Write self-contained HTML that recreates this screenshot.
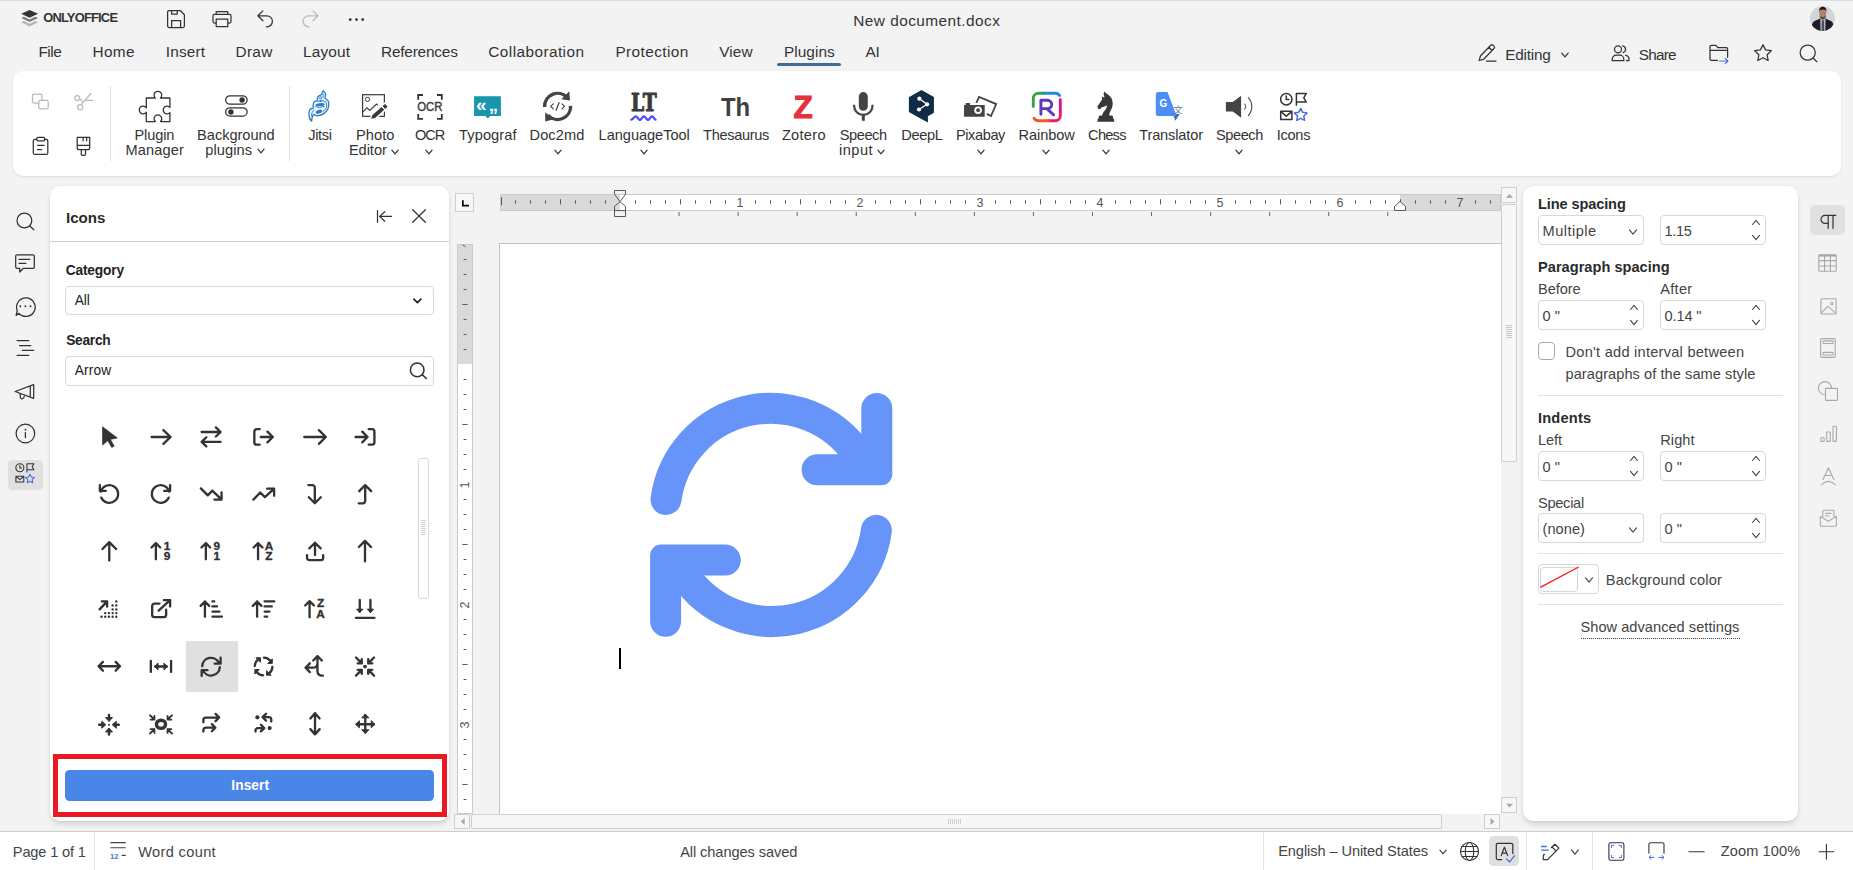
<!DOCTYPE html>
<html lang="en"><head><meta charset="utf-8"><title>New document.docx</title>
<style>
html,body{margin:0;padding:0;}
body{width:1853px;height:870px;overflow:hidden;background:#f3f3f3;position:relative;font-family:"Liberation Sans",sans-serif;color:#333;}
div,svg,span.t{position:absolute;}
span.t{white-space:nowrap;}
svg{overflow:visible;}
.s{fill:none;stroke:#333;stroke-width:1.25;stroke-linecap:round;stroke-linejoin:round;}
.g{fill:none;stroke:#333;stroke-width:2.45;stroke-linecap:round;stroke-linejoin:round;}
.inp{box-sizing:border-box;border:1px solid #d8d8d8;border-radius:4px;background:#fff;}
</style></head>
<body>
<div id="header" style="left:0;top:0;width:0;height:0">
<div style="left:0px;top:0px;width:1853px;height:1.2px;background:#d5dde8;"></div>
<svg style="left:20px;top:9px;" width="18" height="18" viewBox="0 0 18 18">
<path d="M9.6 17.4L1.2 13.3 3.9 12l5.7 2.8 5.7-2.8 2.7 1.3z" fill="#b4b4b4"/>
<path d="M9.6 13.1L1.2 9 3.9 7.7l5.7 2.8 5.7-2.8L18 9z" fill="#7a7a7a"/>
<path d="M9.6 0.9L18 4.8 9.6 8.8 1.2 4.8z" fill="#333"/></svg>
<span class="t" style="top:11.78px;font-size:12.9px;line-height:12.9px;font-weight:700;left:43.2px;letter-spacing:-0.789px;">ONLYOFFICE</span>
<svg style="left:166.00px;top:8.95px;" width="20" height="20" viewBox="-10.0 -10.0 20 20"><path class="s" d="M-8.400 -7a1.500 1.500 0 0 1 1.500-1.500H4.200L8.400 -4.300V7a1.500 1.500 0 0 1-1.500 1.500H-6.900a1.500 1.500 0 0 1-1.500-1.500z M-4.400 -8.500v3.600h5.600V-8.500 M-4.400 8.500V1.600H4.600V8.500"/></svg>
<svg style="left:210.60px;top:8.40px;" width="22" height="22" viewBox="-11.0 -11.0 22 22"><path class="s" d="M-5.800 -4.600V-7.500H5.800v2.900 M-5.800 4.100H-7.500a1.500 1.500 0 0 1-1.500-1.500V-3.100a1.500 1.500 0 0 1 1.500-1.500H7.500a1.500 1.500 0 0 1 1.500 1.500V2.600a1.500 1.500 0 0 1-1.500 1.500H5.800 M-5.800 .2H5.800V7.500H-5.800z"/></svg>
<svg style="left:250px;top:5px;" width="30" height="30" viewBox="0 0 30 30"><path class="s" d="M12.900 5.900L7.800 10.800l5.100 4.900 M8 10.800H16.900a5.500 5.500 0 0 1 0 11H16.300"/></svg>
<svg style="left:295px;top:5px;" width="30" height="30" viewBox="0 0 30 30"><path class="s" style="stroke:#b9b9b9" d="M18 5.900l5.100 4.900-5.100 4.900 M22.900 10.800H13.600a5.500 5.500 0 0 0 0 11h.6"/></svg>
<svg style="left:345px;top:14px;" width="24" height="12" viewBox="0 0 24 12"><circle cx="5.2" cy="5.6" r="1.45" fill="#333"/><circle cx="11.5" cy="5.6" r="1.45" fill="#333"/><circle cx="17.7" cy="5.6" r="1.45" fill="#333"/></svg>
<span class="t" style="top:13.36px;font-size:15.4px;line-height:15.4px;left:853.3px;letter-spacing:0.444px;">New document.docx</span>
<svg style="left:1810px;top:6px;overflow:hidden;border-radius:50%;" width="25" height="25" viewBox="0 0 25 25">
<g><rect width="25" height="25" fill="#d2d6d8"/>
<path d="M1 25.500C1.500 19 2.600 15.800 4.600 14.900L10.200 12.500 12.800 14 15.400 12.500 21 14.900C23 15.800 23.900 19 24.200 25.500z" fill="#1b1e27"/>
<path d="M10.300 12.700L15.500 12.700 15.400 25.500H10.400z" fill="#b4b5c6"/>
<path d="M11.900 14.300h2l.3 11.200h-2.600z" fill="#4b4c58"/>
<path d="M10.900 10h3.800v2.600l-1.900 1.200-1.900-1.200z" fill="#9c715b"/>
<ellipse cx="12.800" cy="6.800" rx="3.500" ry="5" fill="#b0836c"/>
<path d="M9.300 8.500c.3 3.600 1.500 4.700 3.500 4.700s3.200-1.100 3.500-4.700c-.6 2-1.700 2.600-3.500 2.600s-2.900-.6-3.500-2.600z" fill="#5b4335"/>
<path d="M9.100 6c-.4-3.900 1.700-5.300 3.700-5.300s4.100 1.400 3.700 5.300c-.3-1.700-.9-2.500-3.700-2.500s-3.400.8-3.700 2.500z" fill="#1e1613"/></g></svg>
<span class="t" style="top:44.26px;font-size:15.4px;line-height:15.4px;left:38.4px;letter-spacing:-0.428px;">File</span>
<span class="t" style="top:44.26px;font-size:15.4px;line-height:15.4px;left:92.4px;letter-spacing:0.384px;">Home</span>
<span class="t" style="top:44.26px;font-size:15.4px;line-height:15.4px;left:165.8px;letter-spacing:0.133px;">Insert</span>
<span class="t" style="top:44.26px;font-size:15.4px;line-height:15.4px;left:235.6px;letter-spacing:0.270px;">Draw</span>
<span class="t" style="top:44.26px;font-size:15.4px;line-height:15.4px;left:303.1px;letter-spacing:0.147px;">Layout</span>
<span class="t" style="top:44.26px;font-size:15.4px;line-height:15.4px;left:381px;letter-spacing:-0.202px;">References</span>
<span class="t" style="top:44.26px;font-size:15.4px;line-height:15.4px;left:488.3px;letter-spacing:0.415px;">Collaboration</span>
<span class="t" style="top:44.26px;font-size:15.4px;line-height:15.4px;left:615.4px;letter-spacing:0.390px;">Protection</span>
<span class="t" style="top:44.26px;font-size:15.4px;line-height:15.4px;left:719.3px;letter-spacing:0.077px;">View</span>
<span class="t" style="top:44.26px;font-size:15.4px;line-height:15.4px;left:784px;letter-spacing:0.031px;">Plugins</span>
<span class="t" style="top:44.26px;font-size:15.4px;line-height:15.4px;left:865.5px;letter-spacing:-0.373px;">AI</span>
<div style="left:777px;top:63px;width:64px;height:3px;background:#446995;border-radius:1.5px;"></div>
<svg style="left:1476px;top:42px;" width="22" height="22" viewBox="0 0 22 22"><path class="s" d="M3.200 18.500L4.400 14 14.700 3.200a1.700 1.700 0 0 1 2.400 0l.9.900a1.700 1.700 0 0 1 0 2.400L7.700 17.300z M12.800 5.200l3.300 3.300 M10.400 19h9.600"/></svg>
<span class="t" style="top:47.05px;font-size:15.3px;line-height:15.3px;left:1505.2px;letter-spacing:-0.197px;">Editing</span>
<svg style="left:1559.4px;top:49.2px" width="12" height="12" viewBox="-6 -6 12 12"><path d="M-3.2 -1.92L0 1.92L3.2 -1.92" fill="none" stroke="#333" stroke-width="1.2" stroke-linecap="round" stroke-linejoin="round"/></svg>
<svg style="left:1610px;top:43px;" width="22" height="22" viewBox="0 0 22 22"><path class="s" d="M2.200 17.600v-1.400a4 4 0 0 1 4-4h3.600a4 4 0 0 1 4 4v1.400z"/><circle class="s" cx="8" cy="6.300" r="3.500"/><path class="s" d="M12.600 2.900a3.500 3.500 0 0 1 .5 6.800 M15.600 12.400a4 4 0 0 1 3.400 3.900v1.300h-2.600"/></svg>
<span class="t" style="top:47.05px;font-size:15.3px;line-height:15.3px;left:1638.8px;letter-spacing:-0.786px;">Share</span>
<svg style="left:1707px;top:43px;" width="24" height="22" viewBox="0 0 24 22"><path class="s" d="M10.500 17.300H4.300a1.300 1.300 0 0 1-1.300-1.300V3.700a1.300 1.300 0 0 1 1.300-1.300h4.500l2.300 2.300h8.200a1.300 1.300 0 0 1 1.300 1.300v8.300 M3 7.300h17.600"/><path d="M12.500 18h8.300 M18.200 15.400l2.700 2.600-2.700 2.600" fill="none" stroke="#4a6fd8" stroke-width="1.200" stroke-linecap="round" stroke-linejoin="round"/></svg>
<svg style="left:1752.30px;top:42.40px;" width="22" height="22" viewBox="-11.0 -11.0 22 22"><path class="s" d="M0 -8.300l2.560 5.200 5.740.830-4.150 4.050.980 5.720L0 4.800l-5.130 2.700.980-5.720-4.150-4.050 5.740-.830z"/></svg>
<svg style="left:1797.00px;top:42.40px;" width="22" height="22" viewBox="-11.0 -11.0 22 22"><circle class="s" cx="-.3" cy="-.4" r="7.600"/><path class="s" d="M5.100 5l3.700 3.700"/></svg>
</div>
<div id="toolbar" style="left:0;top:0;width:0;height:0">
<div style="left:13px;top:71px;width:1828px;height:105px;background:#fff;border-radius:10px;box-shadow:0 1px 2px rgba(0,0,0,.10);"></div>
<svg style="left:30px;top:92px;" width="22" height="20" viewBox="0 0 22 20"><g class="s" style="stroke:#b9b9b9"><path d="M8.800 11H3.900a1.400 1.400 0 0 1-1.400-1.400V3.500a1.400 1.400 0 0 1 1.400-1.400H10.500a1.400 1.400 0 0 1 1.400 1.400V8.300"/><rect x="8.800" y="8.300" width="9.400" height="8.600" rx="1.400"/></g></svg>
<svg style="left:72px;top:90px;" width="24" height="22" viewBox="0 0 24 22"><g class="s" style="stroke:#b9b9b9"><circle cx="5.200" cy="8" r="2.500"/><circle cx="8.300" cy="17.200" r="2.600"/><path d="M9.200 14.700L18.900 3.500 M7.600 8.800l3.400 3 M14 10.400h6.700"/></g></svg>
<svg style="left:30px;top:135px;" width="22" height="22" viewBox="0 0 22 22"><g class="s"><path d="M6.800 4.400H4.800a1.500 1.500 0 0 0-1.500 1.500V17.900a1.500 1.500 0 0 0 1.500 1.500h11.500a1.500 1.500 0 0 0 1.500-1.500V5.900a1.500 1.500 0 0 0-1.500-1.500h-2"/><rect x="6.800" y="2.300" width="7.800" height="3.500" rx="1"/><path d="M7.500 10.300h6.600 M7.500 14.500h4.200"/></g></svg>
<svg style="left:73px;top:135px;" width="22" height="22" viewBox="0 0 22 22"><g class="s"><path d="M4.200 2.300H16.700V12.700a2 2 0 0 1-2 2H6.200a2 2 0 0 1-2-2z M4.200 10.300H16.700 M10.100 2.300v3.500 M13.600 2.300v3.500 M8.300 14.700v4.600a1 1 0 0 0 1 1h2.200a1 1 0 0 0 1-1v-4.600"/></g></svg>
<div style="left:110px;top:86px;width:1px;height:75px;background:#e0e0e0;"></div>
<div style="left:289px;top:86px;width:1px;height:75px;background:#e0e0e0;"></div>
<svg style="left:136px;top:90px;" width="38" height="34" viewBox="0 0 38 34"><path class="s" style="stroke-width:1.300" d="M10.300 8H19.300A3.850 3.850 0 1 1 24.500 8H33.900V17.400A3.850 3.850 0 1 0 33.900 22.600V31.600H24.500A3.850 3.850 0 1 0 19.300 31.600H10.300V22.100A3.850 3.850 0 1 1 10.300 17.900z"/></svg>
<span class="t" style="top:128.04px;font-size:14.6px;line-height:14.6px;left:134.4px;letter-spacing:-0.113px;">Plugin</span>
<span class="t" style="top:142.94px;font-size:14.6px;line-height:14.6px;left:125.5px;letter-spacing:0.113px;">Manager</span>
<svg style="left:222px;top:92px;" width="30" height="28" viewBox="0 0 30 28"><g class="s" style="stroke-width:1.300"><rect x="3.700" y="3.800" width="21.400" height="8.400" rx="4.200"/><rect x="3.700" y="15.800" width="21.400" height="8.300" rx="4.150"/></g><circle cx="20.100" cy="8" r="2.700" fill="#333"/><circle cx="8.900" cy="20" r="2.700" fill="#333"/></svg>
<span class="t" style="top:128.04px;font-size:14.6px;line-height:14.6px;left:197.1px;letter-spacing:-0.029px;">Background</span>
<span class="t" style="top:142.94px;font-size:14.6px;line-height:14.6px;left:205.2px;letter-spacing:0.107px;">plugins</span>
<svg style="left:254.60000000000002px;top:145.2px" width="12" height="12" viewBox="-6 -6 12 12"><path d="M-3.1 -1.86L0 1.86L3.1 -1.86" fill="none" stroke="#333" stroke-width="1.2" stroke-linecap="round" stroke-linejoin="round"/></svg>
<svg style="left:306px;top:89px;" width="26" height="34" viewBox="0 0 26 34"><path d="M17.3 2.1C17.8 2.4 19.3 3.7 19.6 4.8C19.9 6.0 18.7 7.7 19.1 9.0C19.6 10.2 21.7 10.9 22.3 12.2C22.9 13.4 22.9 14.9 22.7 16.3C22.6 17.8 22.3 19.5 21.4 20.9C20.6 22.3 19.0 23.7 17.7 24.6C16.4 25.5 15.0 26.1 13.6 26.4C12.2 26.7 10.5 26.6 9.5 26.4C8.4 26.3 8.0 25.1 7.4 25.6C6.8 26.1 6.3 28.1 6.0 29.2C5.7 30.3 6.0 32.2 5.6 32.0C5.1 31.9 3.8 29.7 3.4 28.3C3.0 26.9 2.9 25.0 3.0 23.7C3.2 22.3 3.7 20.8 4.4 20.0C5.1 19.2 6.6 19.8 7.1 19.1C7.5 18.3 6.9 16.5 7.2 15.4C7.4 14.3 7.9 13.2 8.6 12.6C9.2 12.0 10.7 12.2 11.2 11.7C11.7 11.2 11.2 10.2 11.4 9.4C11.6 8.6 12.0 7.7 12.7 7.1C13.4 6.5 14.8 6.4 15.4 5.7C16.1 5.0 16.1 3.6 16.4 3.0C16.7 2.4 16.8 1.8 17.3 2.1z" fill="#eef5fc" stroke="#2a7bc8" stroke-width="1.300" stroke-linejoin="round"/><path d="M12.2 12.4C12.8 12.3 14.7 11.6 15.9 11.7C17.1 11.8 18.8 12.1 19.6 12.9C20.4 13.6 20.7 15.1 20.7 16.3C20.7 17.5 20.3 18.9 19.6 20.0C18.9 21.1 16.9 22.5 16.4 23.0" fill="none" stroke="#2a7bc8" stroke-width="1" stroke-linecap="round"/><path d="M7.9 20.9C7.5 21.4 6.1 23.1 5.8 24.1C5.4 25.2 5.8 26.8 5.8 27.3" fill="none" stroke="#2a7bc8" stroke-width=".9" stroke-linecap="round"/><path d="M17.1 5.0C17.1 5.5 17.6 7.2 17.3 8.0C16.9 8.9 15.4 9.8 15.0 10.1" fill="none" stroke="#2a7bc8" stroke-width=".9" stroke-linecap="round"/><ellipse cx="14.100" cy="15.700" rx="4.600" ry="1.500" transform="rotate(-6 14.100 15.700)" fill="#2a7bc8"/><ellipse cx="12.900" cy="22.700" rx="3.300" ry="1.800" transform="rotate(-22 12.900 22.700)" fill="#2a7bc8"/><circle cx="14.600" cy="12" r="1" fill="#2a7bc8"/><ellipse cx="14.300" cy="8.600" rx="1.500" ry=".8" transform="rotate(-30 14.300 8.600)" fill="none" stroke="#2a7bc8" stroke-width=".7"/><path d="M9.500 17.800Q13.500 19.600 18.500 17.300" fill="none" stroke="#2a7bc8" stroke-width=".9" stroke-linecap="round"/></svg>
<span class="t" style="top:128.04px;font-size:14.6px;line-height:14.6px;left:308.2px;letter-spacing:-0.328px;">Jitsi</span>
<svg style="left:360px;top:92px;" width="30" height="28" viewBox="0 0 30 28"><rect x="2.600" y="2.700" width="21.800" height="21.600" fill="none" stroke="#3a3a3a" stroke-width="1.200"/>
<circle cx="7.500" cy="7.400" r="2.100" fill="none" stroke="#3a3a3a" stroke-width="1"/>
<path d="M3 19.800L7 15.800 9.800 18.400 16.500 12 18 13.300" fill="none" stroke="#3a3a3a" stroke-width="1.100"/>
<path d="M10.30 27.49L15.43 27.57L29.53 15.16L24.97 9.99L10.87 22.40z" fill="#fff"/>
<path d="M11.20 26.70L15.04 25.92L24.19 17.87L21.61 14.94L12.46 22.99zM25.16 17.01L27.64 14.83L25.06 11.91L22.59 14.08z" fill="#3a3a3a"/></svg>
<span class="t" style="top:128.04px;font-size:14.6px;line-height:14.6px;left:355.9px;letter-spacing:0.092px;">Photo</span>
<span class="t" style="top:142.94px;font-size:14.6px;line-height:14.6px;left:348.9px;letter-spacing:-0.037px;">Editor</span>
<svg style="left:388.5px;top:146.2px" width="12" height="12" viewBox="-6 -6 12 12"><path d="M-3.1 -1.86L0 1.86L3.1 -1.86" fill="none" stroke="#333" stroke-width="1.2" stroke-linecap="round" stroke-linejoin="round"/></svg>
<svg style="left:415px;top:92px;" width="30" height="30" viewBox="0 0 30 30"><path d="M3.200 7.700V3H8 M22 3h4.800v4.700 M26.800 22.100v4.700H22 M8 26.800H3.200v-4.700" fill="none" stroke="#333" stroke-width="1.800"/>
<text x="2.200" y="19.400" font-size="11.900" fill="#3a3a3a" stroke="#3a3a3a" stroke-width=".35" textLength="25.400" lengthAdjust="spacingAndGlyphs">OCR</text></svg>
<span class="t" style="top:128.04px;font-size:14.6px;line-height:14.6px;left:414.9px;letter-spacing:-1.012px;">OCR</span>
<svg style="left:423.3px;top:146.2px" width="12" height="12" viewBox="-6 -6 12 12"><path d="M-3.1 -1.86L0 1.86L3.1 -1.86" fill="none" stroke="#333" stroke-width="1.2" stroke-linecap="round" stroke-linejoin="round"/></svg>
<svg style="left:472px;top:94px;" width="32" height="28" viewBox="0 0 32 28"><path d="M2.100 2.200H28.900V21.900H18.100L15.800 24.400 13.500 21.900H2.100z" fill="#1796ae"/>
<text x="9.300" y="16.500" text-anchor="middle" font-size="19" font-weight="700" fill="#fff">«</text>
<text x="21.400" y="17.300" text-anchor="middle" font-size="18.500" font-weight="700" fill="#fff">„</text></svg>
<span class="t" style="top:128.04px;font-size:14.6px;line-height:14.6px;left:459.1px;letter-spacing:0.088px;">Typograf</span>
<svg style="left:540px;top:89px;" width="36" height="36" viewBox="0 0 36 36"><g fill="none" stroke="#444" stroke-width="3.400" stroke-linecap="butt"><path d="M4.600 18A13 13 0 0 1 27.200 8.600"/><path d="M30.600 16.800A13 13 0 0 1 8 26.200"/></g>
<path d="M29.300 2.300L30 11.400 21.300 10.200z M5.200 32.500L5.200 23.300 13.800 30.300z" fill="#444"/>
<path d="M13.300 14.900l-2.700 2.500 2.700 2.500 M21.900 14.900l2.700 2.500-2.700 2.500 M19.100 13.500l-3 7.800" fill="none" stroke="#444" stroke-width="1.200" stroke-linecap="round" stroke-linejoin="round"/></svg>
<span class="t" style="top:128.04px;font-size:14.6px;line-height:14.6px;left:529.5px;letter-spacing:0.109px;">Doc2md</span>
<svg style="left:551.6px;top:146.3px" width="12" height="12" viewBox="-6 -6 12 12"><path d="M-3.1 -1.86L0 1.86L3.1 -1.86" fill="none" stroke="#333" stroke-width="1.2" stroke-linecap="round" stroke-linejoin="round"/></svg>
<svg style="left:628px;top:88px;" width="32" height="36" viewBox="0 0 32 36"><text x="3.100" y="23" font-family="DejaVu Serif, serif" font-size="24.600" font-weight="700" fill="#3a3a3a" stroke="#3a3a3a" stroke-width="1" stroke-linejoin="round" textLength="25.600" lengthAdjust="spacingAndGlyphs">LT</text>
<path d="M3.300 31.700C4.800 31.700 6.300 28.400 7.800 28.400S10.400 32 11.900 32 14.400 28.400 15.900 28.400 18.500 32 20 32 22.500 28.400 24 28.400 26.300 31.700 27.500 31.700" fill="none" stroke="#4a4af6" stroke-width="2.300" stroke-linecap="round"/></svg>
<span class="t" style="top:128.04px;font-size:14.6px;line-height:14.6px;left:598.6px;letter-spacing:-0.042px;">LanguageTool</span>
<svg style="left:637.5px;top:146.3px" width="12" height="12" viewBox="-6 -6 12 12"><path d="M-3.1 -1.86L0 1.86L3.1 -1.86" fill="none" stroke="#333" stroke-width="1.2" stroke-linecap="round" stroke-linejoin="round"/></svg>
<svg style="left:718px;top:92px;" width="36" height="28" viewBox="0 0 36 28"><text x="17.500" y="24" text-anchor="middle" font-size="25.200" font-weight="700" fill="#3f3f3f" textLength="29.200" lengthAdjust="spacingAndGlyphs">Th</text></svg>
<span class="t" style="top:128.04px;font-size:14.6px;line-height:14.6px;left:703.1px;letter-spacing:-0.328px;">Thesaurus</span>
<svg style="left:790px;top:90px;" width="26" height="32" viewBox="0 0 26 32"><text x="3.400" y="27.500" font-size="31" font-weight="700" fill="#e2333b" stroke="#e2333b" stroke-width="1.100" stroke-linejoin="miter" textLength="19.200" lengthAdjust="spacingAndGlyphs">Z</text></svg>
<span class="t" style="top:128.04px;font-size:14.6px;line-height:14.6px;left:781.9px;letter-spacing:0.285px;">Zotero</span>
<svg style="left:848px;top:90px;" width="30" height="32" viewBox="0 0 30 32"><rect x="10.800" y="2.100" width="9" height="18.600" rx="4.500" fill="#444"/>
<path d="M6.100 14.800v.9a9.200 9.200 0 0 0 18.400 0v-.9" fill="none" stroke="#444" stroke-width="2.200"/>
<path d="M15.300 24.500v6.300" stroke="#444" stroke-width="3"/></svg>
<span class="t" style="top:128.04px;font-size:14.6px;line-height:14.6px;left:839.7px;letter-spacing:-0.417px;">Speech</span>
<span class="t" style="top:142.94px;font-size:14.6px;line-height:14.6px;left:839px;letter-spacing:0.489px;">input</span>
<svg style="left:874.6px;top:146.2px" width="12" height="12" viewBox="-6 -6 12 12"><path d="M-3.1 -1.86L0 1.86L3.1 -1.86" fill="none" stroke="#333" stroke-width="1.2" stroke-linecap="round" stroke-linejoin="round"/></svg>
<svg style="left:906px;top:88px;" width="30" height="36" viewBox="0 0 30 36"><path d="M15.500 1.900L27.900 8.900V24.800L21.900 28.300V34.600L12.700 29.400 2.900 24.100V9.300z" fill="#0f2b46"/>
<path d="M13.400 10.700l7.700 5.600-8.100 5.200" fill="none" stroke="#fff" stroke-width="1.300"/>
<circle cx="13.400" cy="10.700" r="2.100" fill="#fff"/><circle cx="21.100" cy="16.300" r="2.100" fill="#fff"/><circle cx="13" cy="21.500" r="2.100" fill="#fff"/></svg>
<span class="t" style="top:128.04px;font-size:14.6px;line-height:14.6px;left:901.2px;letter-spacing:-0.323px;">DeepL</span>
<svg style="left:962px;top:94px;" width="36" height="26" viewBox="0 0 36 26"><path d="M14.300 8.900L17.100 2.900 34.200 10.100 29 22 24.800 19.900" fill="none" stroke="#444" stroke-width="1.800"/>
<path d="M2 11H22.700V22.700H2z M3.700 8.900H8v2.500H3.700z" fill="#444"/>
<circle cx="16.100" cy="16.200" r="3.800" fill="#fff"/><circle cx="16.100" cy="16.200" r="1.900" fill="#444"/></svg>
<span class="t" style="top:128.04px;font-size:14.6px;line-height:14.6px;left:955.9px;letter-spacing:-0.403px;">Pixabay</span>
<svg style="left:974.5px;top:146.3px" width="12" height="12" viewBox="-6 -6 12 12"><path d="M-3.1 -1.86L0 1.86L3.1 -1.86" fill="none" stroke="#333" stroke-width="1.2" stroke-linecap="round" stroke-linejoin="round"/></svg>
<svg style="left:1030px;top:90px;" width="34" height="34" viewBox="0 0 34 34"><g fill="none" stroke-width="2.900" stroke-linecap="round">
<path d="M3.300 16.500V8.200a5 5 0 0 1 5-5H14" stroke="#3aa43a"/>
<path d="M14 3.200h11.300a5 5 0 0 1 4.300 2.400" stroke="#1d8fd8"/>
<path d="M30.300 9.700V22" stroke="#d5148c"/>
<path d="M30.300 22v3.700a5 5 0 0 1-5 5H18.500" stroke="#e61f6e"/>
<path d="M18.500 30.700H8.300a5 5 0 0 1-4.300-2.400" stroke="#f05a1e"/>
<path d="M10.900 24.200V10.200h6.600a4.200 4.200 0 0 1 0 8.400H11 M16.800 18.700l6.800 6.100" stroke="#5e38b8" stroke-linejoin="round"/></g></svg>
<span class="t" style="top:128.04px;font-size:14.6px;line-height:14.6px;left:1018.6px;letter-spacing:-0.085px;">Rainbow</span>
<svg style="left:1040.3px;top:146.2px" width="12" height="12" viewBox="-6 -6 12 12"><path d="M-3.1 -1.86L0 1.86L3.1 -1.86" fill="none" stroke="#333" stroke-width="1.2" stroke-linecap="round" stroke-linejoin="round"/></svg>
<svg style="left:1094px;top:89px;" width="24" height="34" viewBox="0 0 24 34"><path d="M10.500 2.300c.5 1.200 1.300 2 2.500 2.600 3.500 1.800 5.700 5.200 5.700 9.600 0 3.400-1.300 5.900-2.600 8.300-.6 1.200-.9 2.400-.8 3.700h1.900c1.200 0 2 .9 2 2v1.500h1v2.700H3.500V30h1v-1.500c0-1.100.8-2 2-2h1.600c.4-2.600 2.300-4.500 3.800-6.500.9-1.300 1.200-2.600.6-3.800-1.200 1.100-2.700 1.700-4.500 1.800l-1.400 1.700c-.8.700-2 .6-2.600-.2-.7-.8-.7-1.900-.1-2.700l4.200-6.300c.2-.9 0-1.900-.4-2.900 1.100.1 2 .5 2.700 1.200.1-1.300-.2-2.400-.9-3.500z" fill="#3a3735"/></svg>
<span class="t" style="top:128.04px;font-size:14.6px;line-height:14.6px;left:1088.1px;letter-spacing:-0.755px;">Chess</span>
<svg style="left:1100.4px;top:146.2px" width="12" height="12" viewBox="-6 -6 12 12"><path d="M-3.1 -1.86L0 1.86L3.1 -1.86" fill="none" stroke="#333" stroke-width="1.2" stroke-linecap="round" stroke-linejoin="round"/></svg>
<svg style="left:1153px;top:90px;" width="32" height="34" viewBox="0 0 32 34"><path d="M19.800 23.900h6.900l-4.300 6.800z" fill="#3f6ad0"/>
<path d="M5 2.100H14.500L23.700 26H5a2.200 2.200 0 0 1-2.200-2.200V4.300A2.200 2.200 0 0 1 5 2.100z" fill="#4d8df6"/>
<text x="10.300" y="16.900" text-anchor="middle" font-size="10" font-weight="700" fill="#fff">G</text>
<text x="25.200" y="22.600" text-anchor="middle" font-family="Liberation Sans, Noto Sans CJK SC, sans-serif" font-size="9.200" fill="#68788c">文</text></svg>
<span class="t" style="top:128.04px;font-size:14.6px;line-height:14.6px;left:1139.2px;letter-spacing:-0.146px;">Translator</span>
<svg style="left:1223px;top:93px;" width="34" height="28" viewBox="0 0 34 28"><path d="M2.900 9.100H9.800L18.100 2.700V24.700L9.800 18.600H2.900z" fill="#444"/>
<path d="M21.400 10.700a4 4 0 0 1 0 5.800" fill="none" stroke="#666" stroke-width="1.100"/>
<path d="M25.200 4.400a13.500 13.500 0 0 1 0 18.400" fill="none" stroke="#444" stroke-width="1.100"/></svg>
<span class="t" style="top:128.04px;font-size:14.6px;line-height:14.6px;left:1215.9px;letter-spacing:-0.400px;">Speech</span>
<svg style="left:1233.4px;top:146.2px" width="12" height="12" viewBox="-6 -6 12 12"><path d="M-3.1 -1.86L0 1.86L3.1 -1.86" fill="none" stroke="#333" stroke-width="1.2" stroke-linecap="round" stroke-linejoin="round"/></svg>
<svg style="left:1278px;top:91px;" width="32.0" height="32.0" viewBox="0 0 32 32"><g fill="none" stroke="#333" stroke-width="1.500" stroke-linejoin="round"><circle cx="8.300" cy="8.200" r="5.700"/><path d="M8.300 5v3.500h2.600" stroke-linecap="round"/>
<path d="M18.400 14.800V2.600H28.200L25.800 6.800 28.200 11H18.400"/>
<rect x="2.700" y="20.300" width="11.200" height="8.100"/><path d="M2.900 20.600l5.400 4.500 5.400-4.500"/></g>
<path d="M22.700 17.300l1.950 4 4.400.640-3.200 3.100.760 4.400-3.910-2.100-3.930 2.100.760-4.400-3.200-3.100 4.400-.640z" fill="none" stroke="#4a6fd8" stroke-width="1.500" stroke-linejoin="round"/></svg>
<span class="t" style="top:128.04px;font-size:14.6px;line-height:14.6px;left:1276.8px;letter-spacing:-0.298px;">Icons</span>
</div>
<div id="left" style="left:0;top:0;width:0;height:0">
<svg style="left:12px;top:208px;" width="28" height="28" viewBox="0 0 28 28"><circle class="s" cx="12.400" cy="12.500" r="7.400"/><path class="s" d="M17.600 17.800l4.200 4"/></svg>
<svg style="left:12px;top:250px;" width="28" height="28" viewBox="0 0 28 28"><path class="s" d="M5 4.800H21a1.300 1.300 0 0 1 1.300 1.300V17a1.300 1.300 0 0 1-1.300 1.300H11.400L7.700 22V18.300H5a1.300 1.300 0 0 1-1.300-1.300V6.100a1.300 1.300 0 0 1 1.300-1.300z M7 9.300H17.800 M7 13.300H13.900"/></svg>
<svg style="left:12px;top:293px;" width="28" height="28" viewBox="0 0 28 28"><path class="s" d="M6.900 20.300A9.300 9.300 0 1 0 5.200 17.500L4.100 22.500z"/><circle cx="8.300" cy="13.300" r=".95" fill="#333"/><circle cx="13.400" cy="13.300" r=".95" fill="#333"/><circle cx="18.500" cy="13.300" r=".95" fill="#333"/></svg>
<svg style="left:12px;top:335px;" width="28" height="28" viewBox="0 0 28 28"><path class="s" d="M5.100 5.500H16.800 M7.500 10.500H18.800 M10.300 15.300H21.700 M5.100 20.300H16.800"/></svg>
<svg style="left:12px;top:378px;" width="28" height="28" viewBox="0 0 28 28"><path class="s" d="M3.100 13.500L21.700 6.700V20.300z M18.300 8V19 M8 15.400l.5 4.400c.1.900 1.300 1.200 2.200.9 1-.3 1.300-1.200 1.600-2.300l.4-1.500"/></svg>
<svg style="left:12px;top:420px;" width="28" height="28" viewBox="0 0 28 28"><circle class="s" cx="13.400" cy="13.500" r="9.300"/><path class="s" d="M13.400 12.500V17.600"/><circle cx="13.400" cy="9.700" r=".9" fill="#333"/></svg>
<div style="left:8px;top:460px;width:35px;height:30px;background:#e0e0e0;border-radius:4px;"></div>
<svg style="left:14.2px;top:462.3px;" width="22.56" height="22.56" viewBox="0 0 32 32"><g fill="none" stroke="#333" stroke-width="1.500" stroke-linejoin="round"><circle cx="8.300" cy="8.200" r="5.700"/><path d="M8.300 5v3.500h2.600" stroke-linecap="round"/>
<path d="M18.400 14.800V2.600H28.200L25.800 6.800 28.200 11H18.400"/>
<rect x="2.700" y="20.300" width="11.200" height="8.100"/><path d="M2.900 20.600l5.400 4.500 5.400-4.500"/></g>
<path d="M22.700 17.300l1.950 4 4.400.640-3.200 3.100.760 4.400-3.910-2.100-3.930 2.100.760-4.400-3.200-3.100 4.400-.640z" fill="none" stroke="#4a6fd8" stroke-width="1.500" stroke-linejoin="round"/></svg>
<div style="left:50px;top:186px;width:399px;height:635px;background:#fff;border-radius:10px;box-shadow:0 4px 6px -2px rgba(0,0,0,.18),0 0 3px rgba(0,0,0,.07);"></div>
<span class="t" style="top:210.22px;font-size:15.1px;line-height:15.1px;color:#2b2b2b;font-weight:700;left:66px;letter-spacing:-0.008px;">Icons</span>
<svg style="left:372px;top:206px;" width="24" height="22" viewBox="0 0 24 22"><path class="s" d="M5.500 4.500V16.300 M7.600 10.400H19.500 M12.800 5.700L7.600 10.400 12.800 15.200"/></svg>
<svg style="left:408px;top:206px;" width="24" height="22" viewBox="0 0 24 22"><path class="s" d="M4.700 3.700L17.400 16.300 M17.400 3.700L4.700 16.300"/></svg>
<div style="left:50px;top:241px;width:399px;height:1px;background:#cfcfcf;"></div>
<span class="t" style="top:263.56px;font-size:13.75px;line-height:13.75px;color:#222;font-weight:700;left:65.7px;letter-spacing:-0.176px;">Category</span>
<div class="inp" style="left:65px;top:286px;width:369px;height:29px;"></div>
<span class="t" style="top:293.56px;font-size:13.75px;line-height:13.75px;color:#222;left:74.7px;letter-spacing:-0.094px;">All</span>
<svg style="left:411px;top:295px;" width="12" height="12" viewBox="0 0 12 12"><path d="M2.900 4.200L6.400 7.700 9.900 4.200" fill="none" stroke="#222" stroke-width="1.700" stroke-linecap="round" stroke-linejoin="round"/></svg>
<span class="t" style="top:333.56px;font-size:13.75px;line-height:13.75px;color:#222;font-weight:700;left:66.2px;letter-spacing:-0.279px;">Search</span>
<div class="inp" style="left:65px;top:356px;width:369px;height:30px;"></div>
<span class="t" style="top:363.56px;font-size:13.75px;line-height:13.75px;color:#222;left:74.7px;letter-spacing:0.159px;">Arrow</span>
<svg style="left:406px;top:358px;" width="24" height="24" viewBox="0 0 24 24"><circle cx="11.200" cy="11.900" r="6.800" fill="none" stroke="#333" stroke-width="1.500"/><path d="M16.200 16.700L20.400 20.500" stroke="#333" stroke-width="1.600" stroke-linecap="round"/></svg>
<div style="left:186px;top:641px;width:52px;height:51px;background:#e0e0e0;"></div>
<svg style="left:95.40px;top:422.80px;" width="28" height="28" viewBox="-14.73684210526316 -14.73684210526316 29.47368421052632 29.47368421052632"><g stroke-width="2.470"><path transform="scale(1.05) translate(-.2,.1)" d="M-6.3 -10.5L8.6 .9 1.700 2.300 5.500 9.100 2.900 10.400-1 3.700-6.300 8z" fill="#333" stroke="#333" stroke-width=".6" stroke-linejoin="round"/></g></svg>
<svg style="left:146.60px;top:422.80px;" width="28" height="28" viewBox="-14.73684210526316 -14.73684210526316 29.47368421052632 29.47368421052632"><g stroke-width="2.470"><path class="g" d="M-9.9 0H10.1 M2.500 -7.300L10.100 0 2.500 7.300"/></g></svg>
<svg style="left:197.40px;top:422.80px;" width="28" height="28" viewBox="-14.73684210526316 -14.73684210526316 29.47368421052632 29.47368421052632"><g stroke-width="2.470"><path class="g" d="M-9.900 -5.300H10.100 M5.100 -10.100L10.100 -5.300 5.100 -.5 M10.100 5.100H-9.900 M-4.900 .3L-9.900 5.100-4.900 9.900"/></g></svg>
<svg style="left:249.00px;top:422.80px;" width="28" height="28" viewBox="-14.73684210526316 -14.73684210526316 29.47368421052632 29.47368421052632"><g stroke-width="2.470"><path class="g" d="M-3.500 -8.200H-6.600a2.500 2.500 0 0 0-2.500 2.500V5.600a2.500 2.500 0 0 0 2.500 2.500H-3.500 M-2.400 0H10.300 M4.700 -5.600L10.300 0 4.700 5.600"/></g></svg>
<svg style="left:300.60px;top:422.80px;" width="28" height="28" viewBox="-14.73684210526316 -14.73684210526316 29.47368421052632 29.47368421052632"><g stroke-width="2.470"><path class="g" d="M-11.300 0H11.400 M4.100 -7.200L11.400 0 4.100 7.200"/></g></svg>
<svg style="left:351.40px;top:422.80px;" width="28" height="28" viewBox="-14.73684210526316 -14.73684210526316 29.47368421052632 29.47368421052632"><g stroke-width="2.470"><path class="g" d="M-10 0H2.700 M-2.900 -5.600L2.700 0-2.900 5.600 M3.900 -8.200H7.400a2.500 2.500 0 0 1 2.500 2.500V5.600a2.500 2.500 0 0 1-2.500 2.500H3.900"/></g></svg>
<svg style="left:95.40px;top:479.60px;" width="28" height="28" viewBox="-14.73684210526316 -14.73684210526316 29.47368421052632 29.47368421052632"><g stroke-width="2.470"><path class="g" d="M-8.64 -2.56A9.3 9.3 0 1 1 -8.20 3.78 M-9.600 -9.400V-3.200H-3.400"/></g></svg>
<svg style="left:146.60px;top:479.60px;" width="28" height="28" viewBox="-14.73684210526316 -14.73684210526316 29.47368421052632 29.47368421052632"><g stroke-width="2.470"><path class="g" d="M8.64 -2.56A9.3 9.3 0 1 0 8.20 3.78 M9.600 -9.400V-3.200H3.400"/></g></svg>
<svg style="left:197.40px;top:479.60px;" width="28" height="28" viewBox="-14.73684210526316 -14.73684210526316 29.47368421052632 29.47368421052632"><g stroke-width="2.470"><path class="g" d="M-10.700 -5.900L-3.400 1.400 1.400 -3.500 11.100 5.900 M11.100 -1.600V5.900H3.600"/></g></svg>
<svg style="left:249.00px;top:479.60px;" width="28" height="28" viewBox="-14.73684210526316 -14.73684210526316 29.47368421052632 29.47368421052632"><g stroke-width="2.470"><path class="g" d="M-10.100 5.900L-2.900 -1.600 2 3.300 11.700 -5.600 M4.300 -5.600H11.700V1.900"/></g></svg>
<svg style="left:300.60px;top:479.60px;" width="28" height="28" viewBox="-14.73684210526316 -14.73684210526316 29.47368421052632 29.47368421052632"><g stroke-width="2.470"><path class="g" d="M-7 -9.400H-2.700a2.500 2.500 0 0 1 2.500 2.500V9.700 M-6.500 3.400L-.2 9.700 6.100 3.400"/></g></svg>
<svg style="left:351.40px;top:479.60px;" width="28" height="28" viewBox="-14.73684210526316 -14.73684210526316 29.47368421052632 29.47368421052632"><g stroke-width="2.470"><path class="g" d="M-6.600 9.800H-2.300a2.500 2.500 0 0 0 2.500-2.500V-9.300 M-6.100 -3L.2 -9.300 6.500 -3"/></g></svg>
<svg style="left:95.40px;top:537.30px;" width="28" height="28" viewBox="-14.73684210526316 -14.73684210526316 29.47368421052632 29.47368421052632"><g stroke-width="2.470"><path class="g" d="M.3 10.100V-9.300 M-6.900 -2.100L.3 -9.300 7.500 -2.100"/></g></svg>
<svg style="left:146.60px;top:537.30px;" width="28" height="28" viewBox="-14.73684210526316 -14.73684210526316 29.47368421052632 29.47368421052632"><g stroke-width="2.470"><path class="g" d="M-5.400 8.800V-8.300 M-10 -3.700L-5.400 -8.300-.8 -3.700"/><text transform="translate(6.3,-1) scale(1.13,1)" text-anchor="middle" font-size="11" font-weight="700" fill="#333" stroke="#333" stroke-width=".35">1</text><text transform="translate(6.3,9.6) scale(1.13,1)" text-anchor="middle" font-size="11" font-weight="700" fill="#333" stroke="#333" stroke-width=".35">9</text></g></svg>
<svg style="left:197.40px;top:537.30px;" width="28" height="28" viewBox="-14.73684210526316 -14.73684210526316 29.47368421052632 29.47368421052632"><g stroke-width="2.470"><path class="g" d="M-5.400 8.800V-8.300 M-10 -3.700L-5.400 -8.300-.8 -3.700"/><text transform="translate(6.1,-1) scale(1.13,1)" text-anchor="middle" font-size="11" font-weight="700" fill="#333" stroke="#333" stroke-width=".35">9</text><text transform="translate(6.1,9.6) scale(1.13,1)" text-anchor="middle" font-size="11" font-weight="700" fill="#333" stroke="#333" stroke-width=".35">1</text></g></svg>
<svg style="left:249.00px;top:537.30px;" width="28" height="28" viewBox="-14.73684210526316 -14.73684210526316 29.47368421052632 29.47368421052632"><g stroke-width="2.470"><path class="g" d="M-5.200 8.800V-8.300 M-9.800 -3.700L-5.200 -8.300-.6 -3.700"/><text transform="translate(6.2,-1) scale(1.13,1)" text-anchor="middle" font-size="11" font-weight="700" fill="#333" stroke="#333" stroke-width=".35">A</text><text transform="translate(6.2,9.6) scale(1.13,1)" text-anchor="middle" font-size="11" font-weight="700" fill="#333" stroke="#333" stroke-width=".35">Z</text></g></svg>
<svg style="left:300.60px;top:537.30px;" width="28" height="28" viewBox="-14.73684210526316 -14.73684210526316 29.47368421052632 29.47368421052632"><g stroke-width="2.470"><path class="g" d="M0 4.300V-8.700 M-6 -2.800L0 -8.700 6 -2.800 M-8.400 4.300V7.100a2.500 2.500 0 0 0 2.500 2.500H6.100a2.500 2.500 0 0 0 2.500-2.500V4.300"/></g></svg>
<svg style="left:351.40px;top:537.30px;" width="28" height="28" viewBox="-14.73684210526316 -14.73684210526316 29.47368421052632 29.47368421052632"><g stroke-width="2.470"><path class="g" d="M0 11V-10.600 M-6.400 -4.200L0 -10.600 6.400 -4.200"/></g></svg>
<svg style="left:95.40px;top:594.50px;" width="28" height="28" viewBox="-14.73684210526316 -14.73684210526316 29.47368421052632 29.47368421052632"><g stroke-width="2.470"><path class="g" d="M-9.900 .4L-2 -8 M-7.500 -8H-2V-2.500"/><circle cx="7.7" cy="-8" r="1.25" fill="#333"/><circle cx="3.8" cy="-3.8" r="1.25" fill="#333"/><circle cx="7.7" cy="-3.8" r="1.25" fill="#333"/><circle cx="3.8" cy="0.4" r="1.25" fill="#333"/><circle cx="7.7" cy="0.4" r="1.25" fill="#333"/><circle cx="-4" cy="4.3" r="1.25" fill="#333"/><circle cx="-0.1" cy="4.3" r="1.25" fill="#333"/><circle cx="3.8" cy="4.3" r="1.25" fill="#333"/><circle cx="7.7" cy="4.3" r="1.25" fill="#333"/><circle cx="-7.9" cy="8.1" r="1.25" fill="#333"/><circle cx="-4" cy="8.1" r="1.25" fill="#333"/><circle cx="-0.1" cy="8.1" r="1.25" fill="#333"/><circle cx="3.8" cy="8.1" r="1.25" fill="#333"/><circle cx="7.7" cy="8.1" r="1.25" fill="#333"/></g></svg>
<svg style="left:146.60px;top:594.50px;" width="28" height="28" viewBox="-14.73684210526316 -14.73684210526316 29.47368421052632 29.47368421052632"><g stroke-width="2.470"><path class="g" d="M-1.500 -5.700H-6.800a2.500 2.500 0 0 0-2.500 2.500V6.100a2.500 2.500 0 0 0 2.500 2.500H2.900a2.500 2.500 0 0 0 2.500-2.500V.8 M-2.500 1.800L9.600 -9.300 M3 -9.300H9.600V-2.600"/></g></svg>
<svg style="left:197.40px;top:594.50px;" width="28" height="28" viewBox="-14.73684210526316 -14.73684210526316 29.47368421052632 29.47368421052632"><g stroke-width="2.470"><path class="g" d="M-6.400 8.200V-7.900 M-10.900 -3.300L-6.400 -7.900-1.900 -3.300 M1.500 -8H3.400 M1.500 -2.700H6.300 M1.500 2.700H8.900 M1.500 8H11.500"/></g></svg>
<svg style="left:249.00px;top:594.50px;" width="28" height="28" viewBox="-14.73684210526316 -14.73684210526316 29.47368421052632 29.47368421052632"><g stroke-width="2.470"><path class="g" d="M-6.200 8.200V-7.900 M-10.700 -3.300L-6.200 -7.900-1.700 -3.300 M1.700 -8H11.900 M1.700 -2.700H9.300 M1.700 2.700H6.800 M1.700 8H4.400"/></g></svg>
<svg style="left:300.60px;top:594.50px;" width="28" height="28" viewBox="-14.73684210526316 -14.73684210526316 29.47368421052632 29.47368421052632"><g stroke-width="2.470"><path class="g" d="M-5.700 8.800V-8.300 M-10.300 -3.700L-5.700 -8.300-1.100 -3.700"/><text transform="translate(5.8,-1.7) scale(1.13,1)" text-anchor="middle" font-size="11" font-weight="700" fill="#333" stroke="#333" stroke-width=".35">Z</text><text transform="translate(5.8,9.6) scale(1.13,1)" text-anchor="middle" font-size="11" font-weight="700" fill="#333" stroke="#333" stroke-width=".35">A</text></g></svg>
<svg style="left:351.40px;top:594.50px;" width="28" height="28" viewBox="-14.73684210526316 -14.73684210526316 29.47368421052632 29.47368421052632"><g stroke-width="2.470"><path class="g" d="M-5.500 -9.500V3 M5.700 -9.500V3 M-9.600 9.300H10"/><path d="M-8.900 .2H-2.100L-5.500 3.700z" fill="#333" stroke="#333" stroke-width="1" stroke-linejoin="round"/><path d="M2.300 .2H9.100L5.700 3.700z" fill="#333" stroke="#333" stroke-width="1" stroke-linejoin="round"/></g></svg>
<svg style="left:95.40px;top:652.00px;" width="28" height="28" viewBox="-14.73684210526316 -14.73684210526316 29.47368421052632 29.47368421052632"><g stroke-width="2.470"><path class="g" d="M-11 .3H11.600 M-6.400 -4.300L-11 .3-6.400 4.900 M7 -4.300L11.600 .3 7 4.900"/></g></svg>
<svg style="left:146.60px;top:652.00px;" width="28" height="28" viewBox="-14.73684210526316 -14.73684210526316 29.47368421052632 29.47368421052632"><g stroke-width="2.470"><path class="g" d="M-10.700 -5.300V6.200 M10.600 -5.300V6.200 M-6.200 .5H6.200"/><path d="M-3.100 -3.100L-6.800 .5-3.100 4.100z" fill="#333" stroke="#333" stroke-width="1" stroke-linejoin="round"/><path d="M3.100 -3.100L6.800 .5 3.100 4.100z" fill="#333" stroke="#333" stroke-width="1" stroke-linejoin="round"/></g></svg>
<svg style="left:197.40px;top:652.00px;" width="28" height="28" viewBox="-14.73684210526316 -14.73684210526316 29.47368421052632 29.47368421052632"><g stroke-width="2.470"><path class="g" d="M-9.29 0.21A9.3 9.3 0 0 1 8.56 -2.93 M10.100 -8.700V-2.500H3.900 M9.29 1.19A9.3 9.3 0 0 1 -8.56 4.33 M-9.800 10.500V4.400H-3.700"/></g></svg>
<svg style="left:249.00px;top:652.00px;" width="28" height="28" viewBox="-14.73684210526316 -14.73684210526316 29.47368421052632 29.47368421052632"><g stroke-width="2.470"><g transform="translate(.6,.5) rotate(0)"><path class="g" d="M-9.29 -0.49A9.3 9.3 0 0 1 -5.98 -7.12"/><path d="M-8 -9.200H-3.200V-4.400z" fill="#333" stroke="#333" stroke-width="1" stroke-linejoin="round"/></g><g transform="translate(.6,.5) rotate(90)"><path class="g" d="M-9.29 -0.49A9.3 9.3 0 0 1 -5.98 -7.12"/><path d="M-8 -9.200H-3.200V-4.400z" fill="#333" stroke="#333" stroke-width="1" stroke-linejoin="round"/></g><g transform="translate(.6,.5) rotate(180)"><path class="g" d="M-9.29 -0.49A9.3 9.3 0 0 1 -5.98 -7.12"/><path d="M-8 -9.200H-3.200V-4.400z" fill="#333" stroke="#333" stroke-width="1" stroke-linejoin="round"/></g><g transform="translate(.6,.5) rotate(270)"><path class="g" d="M-9.29 -0.49A9.3 9.3 0 0 1 -5.98 -7.12"/><path d="M-8 -9.200H-3.200V-4.400z" fill="#333" stroke="#333" stroke-width="1" stroke-linejoin="round"/></g></g></svg>
<svg style="left:300.60px;top:652.00px;" width="28" height="28" viewBox="-14.73684210526316 -14.73684210526316 29.47368421052632 29.47368421052632"><g stroke-width="2.470"><path class="g" d="M8.300 10.200H7.100a4.500 4.500 0 0 1-4.500-4.500V-10.400 M-1.900 -5.800L2.600 -10.400 7.200 -5.800 M-10 1.800H-1.900a4.500 4.500 0 0 0 4.500-4.500 M-5.400 -2.800L-10 1.800-5.400 6.400"/></g></svg>
<svg style="left:351.40px;top:652.00px;" width="28" height="28" viewBox="-14.73684210526316 -14.73684210526316 29.47368421052632 29.47368421052632"><g stroke-width="2.470"><circle cx="0" cy="0.6" r="2.0" fill="#333"/><g transform="translate(0,.6) rotate(0)"><path class="g" d="M-9.500 -9.500L-3.400 -3.400 M-3.400 -7.700V-3.400H-7.700"/></g><g transform="translate(0,.6) rotate(90)"><path class="g" d="M-9.500 -9.500L-3.400 -3.400 M-3.400 -7.700V-3.400H-7.700"/></g><g transform="translate(0,.6) rotate(180)"><path class="g" d="M-9.500 -9.500L-3.400 -3.400 M-3.400 -7.700V-3.400H-7.700"/></g><g transform="translate(0,.6) rotate(270)"><path class="g" d="M-9.500 -9.500L-3.400 -3.400 M-3.400 -7.700V-3.400H-7.700"/></g></g></svg>
<svg style="left:95.40px;top:710.00px;" width="28" height="28" viewBox="-14.73684210526316 -14.73684210526316 29.47368421052632 29.47368421052632"><g stroke-width="2.470"><circle cx="0" cy="0.8" r="1.0" fill="#333"/><g transform="translate(0,.8) rotate(0)"><path class="g" d="M0 -10.300V-7" style="stroke-width:2.600"/><path d="M-3.700 -7.600H3.700L0 -3.400z" fill="#333" stroke="#333" stroke-width="1" stroke-linejoin="round"/></g><g transform="translate(0,.8) rotate(90)"><path class="g" d="M0 -10.300V-7" style="stroke-width:2.600"/><path d="M-3.700 -7.600H3.700L0 -3.400z" fill="#333" stroke="#333" stroke-width="1" stroke-linejoin="round"/></g><g transform="translate(0,.8) rotate(180)"><path class="g" d="M0 -10.300V-7" style="stroke-width:2.600"/><path d="M-3.700 -7.600H3.700L0 -3.400z" fill="#333" stroke="#333" stroke-width="1" stroke-linejoin="round"/></g><g transform="translate(0,.8) rotate(270)"><path class="g" d="M0 -10.300V-7" style="stroke-width:2.600"/><path d="M-3.700 -7.600H3.700L0 -3.400z" fill="#333" stroke="#333" stroke-width="1" stroke-linejoin="round"/></g></g></svg>
<svg style="left:146.60px;top:710.00px;" width="28" height="28" viewBox="-14.73684210526316 -14.73684210526316 29.47368421052632 29.47368421052632"><g stroke-width="2.470"><ellipse cx="0" cy=".3" rx="4.800" ry="4.300" fill="none" stroke="#333" stroke-width="3.600"/><g transform="translate(0,.4) scale(1,1)"><path class="g" d="M-11.600 -9.600L-6.900 -5 M-6.900 -9V-5H-10.900" style="stroke-width:1.900"/></g><g transform="translate(0,.4) scale(-1,1)"><path class="g" d="M-11.600 -9.600L-6.900 -5 M-6.900 -9V-5H-10.900" style="stroke-width:1.900"/></g><g transform="translate(0,.4) scale(-1,-1)"><path class="g" d="M-11.600 -9.600L-6.900 -5 M-6.900 -9V-5H-10.900" style="stroke-width:1.900"/></g><g transform="translate(0,.4) scale(1,-1)"><path class="g" d="M-11.600 -9.600L-6.900 -5 M-6.900 -9V-5H-10.900" style="stroke-width:1.900"/></g></g></svg>
<svg style="left:197.40px;top:710.00px;" width="28" height="28" viewBox="-14.73684210526316 -14.73684210526316 29.47368421052632 29.47368421052632"><g stroke-width="2.470"><path class="g" d="M-8 -1.800V-4.300a2.500 2.500 0 0 1 2.500-2.500H8.600 M4.800 -10.600L8.600 -6.800 4.800 -3 M-8 7.900V6.400a2.500 2.500 0 0 1 2.500-2.500H4.600 M.9 .2L4.600 3.900 .9 7.600"/></g></svg>
<svg style="left:249.00px;top:710.00px;" width="28" height="28" viewBox="-14.73684210526316 -14.73684210526316 29.47368421052632 29.47368421052632"><g stroke-width="2.470"><circle cx="-5.9" cy="-7" r="2.2" fill="#333"/><circle cx="7" cy="4.3" r="2.2" fill="#333"/><path class="g" d="M8.700 -2.600V-4.700a2.500 2.500 0 0 0-2.500-2.500H-.5 M3.200 -10.700L-.5 -7.200 3.200 -3.600 M-7.900 7.900V6.800a2.500 2.500 0 0 1 2.500-2.500H1.300 M-2.200 .8L1.300 4.300-2.200 7.700"/></g></svg>
<svg style="left:300.60px;top:710.00px;" width="28" height="28" viewBox="-14.73684210526316 -14.73684210526316 29.47368421052632 29.47368421052632"><g stroke-width="2.470"><path class="g" d="M0 -11.400V11 M-4.900 -5.800L0 -11.400 4.900 -5.800 M-4.900 5.400L0 11 4.900 5.400"/></g></svg>
<svg style="left:351.40px;top:710.00px;" width="28" height="28" viewBox="-14.73684210526316 -14.73684210526316 29.47368421052632 29.47368421052632"><g stroke-width="2.470"><path class="g" d="M-8.700 .3H9.300 M.3 -9.300V8.900"/><path d="M-5.900 -3.500L-9.800 .3-5.900 4.100z" fill="#333" stroke="#333" stroke-width="1" stroke-linejoin="round"/><path d="M6.500 -3.500L10.400 .3 6.500 4.100z" fill="#333" stroke="#333" stroke-width="1" stroke-linejoin="round"/><path d="M-3.500 -6.500L.3 -10.400 4.100 -6.500z" fill="#333" stroke="#333" stroke-width="1" stroke-linejoin="round"/><path d="M-3.500 6.100L.3 10 4.100 6.100z" fill="#333" stroke="#333" stroke-width="1" stroke-linejoin="round"/></g></svg>
<div style="left:418px;top:458px;width:11px;height:141px;box-sizing:border-box;border:1px solid #d8d8d8;border-radius:3px;background:#fff;"></div>
<svg style="left:418px;top:519px;" width="11" height="18" viewBox="0 0 11 18"><path d="M3 1.500H7.500 M3 3.500H7.500 M3 5.500H7.500 M3 7.500H7.500 M3 9.500H7.500 M3 11.500H7.500 M3 13.500H7.500 M3 15.500H7.500" stroke="#cdcdcd" stroke-width="1"/></svg>
<div style="left:65px;top:770px;width:369px;height:31px;background:#4a86e8;border-radius:4.500px;"></div>
<span class="t" style="top:778.56px;font-size:13.75px;line-height:13.75px;color:#fff;font-weight:700;left:231.3px;letter-spacing:0.058px;">Insert</span>
<div style="left:53px;top:754px;width:394px;height:63px;box-sizing:border-box;border:5px solid #ea1923;"></div>
</div>
<div id="center" style="left:0;top:0;width:0;height:0">
<div style="left:455px;top:193px;width:19px;height:19px;box-sizing:border-box;border:1px solid #cfcfcf;background:#f7f7f7;"></div>
<svg style="left:455px;top:193px;" width="19" height="19" viewBox="0 0 19 19"><path d="M7 7.200H8.700V11.700H14V13.600H7z" fill="#000"/></svg>
<div style="left:500px;top:194px;width:1001px;height:17px;box-sizing:border-box;border:1px solid #cbcbcb;background:#fff;"></div>
<div style="left:501px;top:195px;width:119px;height:15px;background:#dadada;"></div>
<div style="left:1400px;top:195px;width:100px;height:15px;background:#dadada;"></div>
<svg style="left:0px;top:194px;" width="1853" height="17" viewBox="0 0 1853 17"><path d="M501.5 3.300V11.300M515.5 6.300V9.700M530.5 6.300V9.700M545.5 6.300V9.700M560.5 5.200V10.400M575.5 6.300V9.700M590.5 6.300V9.700M605.5 6.300V9.700M635.5 6.300V9.700M650.5 6.300V9.700M665.5 6.300V9.700M680.5 5.200V10.400M695.5 6.300V9.700M710.5 6.300V9.700M725.5 6.300V9.700M755.5 6.300V9.700M770.5 6.300V9.700M785.5 6.300V9.700M800.5 5.200V10.400M815.5 6.300V9.700M830.5 6.300V9.700M845.5 6.300V9.700M875.5 6.300V9.700M890.5 6.300V9.700M905.5 6.300V9.700M920.5 5.200V10.400M935.5 6.300V9.700M950.5 6.300V9.700M965.5 6.300V9.700M995.5 6.300V9.700M1010.5 6.300V9.700M1025.5 6.300V9.700M1040.5 5.200V10.400M1055.5 6.300V9.700M1070.5 6.300V9.700M1085.5 6.300V9.700M1115.5 6.300V9.700M1130.5 6.300V9.700M1145.5 6.300V9.700M1160.5 5.200V10.400M1175.5 6.300V9.700M1190.5 6.300V9.700M1205.5 6.300V9.700M1235.5 6.300V9.700M1250.5 6.300V9.700M1265.5 6.300V9.700M1280.5 5.200V10.400M1295.5 6.300V9.700M1310.5 6.300V9.700M1325.5 6.300V9.700M1355.5 6.300V9.700M1370.5 6.300V9.700M1385.5 6.300V9.700M1400.5 5.200V10.400M1415.5 6.300V9.700M1430.5 6.300V9.700M1445.5 6.300V9.700M1475.5 6.300V9.700M1490.5 6.300V9.700" stroke="#585858" stroke-width="1" fill="none"/></svg>
<span class="t" style="top:196.62px;font-size:12.5px;line-height:12.5px;color:#555;left:440px;width:600px;text-align:center;">1</span>
<span class="t" style="top:196.62px;font-size:12.5px;line-height:12.5px;color:#555;left:560px;width:600px;text-align:center;">2</span>
<span class="t" style="top:196.62px;font-size:12.5px;line-height:12.5px;color:#555;left:680px;width:600px;text-align:center;">3</span>
<span class="t" style="top:196.62px;font-size:12.5px;line-height:12.5px;color:#555;left:800px;width:600px;text-align:center;">4</span>
<span class="t" style="top:196.62px;font-size:12.5px;line-height:12.5px;color:#555;left:920px;width:600px;text-align:center;">5</span>
<span class="t" style="top:196.62px;font-size:12.5px;line-height:12.5px;color:#555;left:1040px;width:600px;text-align:center;">6</span>
<span class="t" style="top:196.62px;font-size:12.5px;line-height:12.5px;color:#555;left:1160px;width:600px;text-align:center;">7</span>
<svg style="left:0px;top:212px;" width="1853" height="5" viewBox="0 0 1853 5"><path d="M679.06 0V4M738.12 0V4M797.1800000000001 0V4M856.24 0V4M915.3 0V4M974.36 0V4M1033.42 0V4M1092.48 0V4M1151.54 0V4M1210.6 0V4M1269.66 0V4M1328.72 0V4M1387.78 0V4" stroke="#666" stroke-width="1" fill="none"/></svg>
<svg style="left:612px;top:188px;" width="16" height="30" viewBox="0 0 16 30"><path d="M2.500 2.500H13.500V6.200L8 13.700 13.500 18.400V28.500H2.500V18.400L8 13.700 2.500 6.200z M2.500 22.600H13.500" fill="none" stroke="#585858" stroke-width="1" stroke-linejoin="round"/></svg>
<svg style="left:1392px;top:199px;" width="16" height="14" viewBox="0 0 16 14"><path d="M2.500 11.500V7.400L8 2.500 13.500 7.400V11.500z" fill="#fff" stroke="#585858" stroke-width="1" stroke-linejoin="round"/></svg>
<div style="left:457px;top:244px;width:16px;height:570px;box-sizing:border-box;border:1px solid #cbcbcb;background:#fff;"></div>
<div style="left:458px;top:245px;width:14px;height:119px;background:#dadada;"></div>
<svg style="left:457px;top:0px;" width="16" height="870" viewBox="0 0 16 870"><path d="M5.500 244.8L8.500 246.7M6.600 259.5H9.400M6.600 274.5H9.400M6.600 289.5H9.400M5.400 304.5H10.600M6.600 319.5H9.400M6.600 334.5H9.400M6.600 349.5H9.400M6.600 379.5H9.400M6.600 394.5H9.400M6.600 409.5H9.400M5.400 424.5H10.600M6.600 439.5H9.400M6.600 454.5H9.400M6.600 469.5H9.400M6.600 499.5H9.400M6.600 514.5H9.400M6.600 529.5H9.400M5.400 544.5H10.600M6.600 559.5H9.400M6.600 574.5H9.400M6.600 589.5H9.400M6.600 619.5H9.400M6.600 634.5H9.400M6.600 649.5H9.400M5.400 664.5H10.600M6.600 679.5H9.400M6.600 694.5H9.400M6.600 709.5H9.400M6.600 739.5H9.400M6.600 754.5H9.400M6.600 769.5H9.400M5.400 784.5H10.600M6.600 799.5H9.400M6.600 814.5H9.400" stroke="#585858" stroke-width="1" fill="none"/></svg>
<span class="t" style="left:445px;top:474.5px;width:40px;height:20px;line-height:20px;text-align:center;font-size:12.500px;color:#555;transform:rotate(-90deg);">1</span>
<span class="t" style="left:445px;top:594.5px;width:40px;height:20px;line-height:20px;text-align:center;font-size:12.500px;color:#555;transform:rotate(-90deg);">2</span>
<span class="t" style="left:445px;top:714.5px;width:40px;height:20px;line-height:20px;text-align:center;font-size:12.500px;color:#555;transform:rotate(-90deg);">3</span>
<div style="left:499px;top:243px;width:1010px;height:600px;box-sizing:border-box;border:1px solid #c4c4c4;background:#fff;"></div>
<div style="left:1501px;top:186px;width:22px;height:645px;background:#f3f3f3;"></div>
<div style="left:450px;top:814px;width:1070px;height:17px;background:#f3f3f3;"></div>
<div style="left:1501px;top:187px;width:16px;height:16px;box-sizing:border-box;border:1px solid #cfcfcf;background:#f7f7f7;"></div>
<svg style="left:1501.5px;top:187.5px;" width="15" height="15" viewBox="0 0 15 15"><path d="M4 9.700L7.500 5.900 11 9.700z" fill="#a8a8a8"/></svg>
<div style="left:1501px;top:204px;width:16px;height:258px;box-sizing:border-box;border:1px solid #cfcfcf;background:#f7f7f7;border-radius:2px;"></div>
<svg style="left:1501px;top:325px;" width="16" height="14" viewBox="0 0 16 14"><path d="M5 .500H11 M5 2.500H11 M5 4.500H11 M5 6.500H11 M5 8.500H11 M5 10.500H11 M5 12.500H11" stroke="#c9c9c9" stroke-width="1"/></svg>
<div style="left:1501px;top:797px;width:16px;height:16px;box-sizing:border-box;border:1px solid #cfcfcf;background:#f7f7f7;"></div>
<svg style="left:1501.5px;top:797.5px;" width="15" height="15" viewBox="0 0 15 15"><path d="M4 5.800L7.500 9.600 11 5.800z" fill="#a8a8a8"/></svg>
<div style="left:454px;top:814px;width:16px;height:15px;box-sizing:border-box;border:1px solid #cfcfcf;background:#f7f7f7;"></div>
<svg style="left:454.5px;top:814px;" width="15" height="15" viewBox="0 0 15 15"><path d="M9.700 4L5.700 7.500 9.700 11z" fill="#a8a8a8"/></svg>
<div style="left:471px;top:814px;width:971px;height:15px;box-sizing:border-box;border:1px solid #cfcfcf;background:#f7f7f7;border-radius:2px;"></div>
<svg style="left:948px;top:814px;" width="16" height="15" viewBox="0 0 16 15"><path d="M.500 5V10 M2.500 5V10 M4.500 5V10 M6.500 5V10 M8.500 5V10 M10.500 5V10 M12.500 5V10" stroke="#cfcfcf" stroke-width="1"/></svg>
<div style="left:1484px;top:814px;width:16px;height:15px;box-sizing:border-box;border:1px solid #cfcfcf;background:#f7f7f7;"></div>
<svg style="left:1484.5px;top:814px;" width="15" height="15" viewBox="0 0 15 15"><path d="M5.500 4L9.500 7.500 5.500 11z" fill="#a8a8a8"/></svg>
<svg style="left:650px;top:393px;" width="243" height="243" viewBox="0 0 243 243"><g><path d="M16 106.500A105.400 105.400 0 0 1 208 62" fill="none" stroke="#6694f9" stroke-width="31" stroke-linecap="round"/><path d="M211.300 15.500A15.500 15.500 0 0 1 242.300 15.500V81.200A11 11 0 0 1 231.300 92.200H167.100A15.500 15.500 0 0 1 167.100 61.200H211.300z" fill="#6694f9"/></g><g transform="rotate(180 121.200 121.900)"><path d="M16 106.500A105.400 105.400 0 0 1 208 62" fill="none" stroke="#6694f9" stroke-width="31" stroke-linecap="round"/><path d="M211.300 15.500A15.500 15.500 0 0 1 242.300 15.500V81.200A11 11 0 0 1 231.300 92.200H167.100A15.500 15.500 0 0 1 167.100 61.200H211.300z" fill="#6694f9"/></g></svg>
<div style="left:619px;top:648px;width:2px;height:21px;background:#000;"></div>
</div>
<div id="right" style="left:0;top:0;width:0;height:0">
<div style="left:1523px;top:186px;width:275px;height:635px;background:#fff;border-radius:10px;box-shadow:0 4px 6px -2px rgba(0,0,0,.18),0 0 3px rgba(0,0,0,.07);"></div>
<span class="t" style="top:196.64px;font-size:14.6px;line-height:14.6px;color:#2b2b2b;font-weight:700;left:1538px;letter-spacing:-0.125px;">Line spacing</span>
<div class="inp" style="left:1538px;top:215px;width:106px;height:30px;"></div>
<span class="t" style="top:224.24px;font-size:14.6px;line-height:14.6px;color:#444;left:1542.6px;letter-spacing:0.450px;">Multiple</span>
<svg style="left:1626.5px;top:226.1px" width="12" height="12" viewBox="-6 -6 12 12"><path d="M-3.5 -2.10L0 2.10L3.5 -2.10" fill="none" stroke="#444" stroke-width="1.1" stroke-linecap="round" stroke-linejoin="round"/></svg>
<div class="inp" style="left:1660px;top:215px;width:106px;height:30px;"></div>
<span class="t" style="top:224.24px;font-size:14.6px;line-height:14.6px;color:#444;left:1664.6px;letter-spacing:-0.402px;">1.15</span>
<svg style="left:1749.5px;top:215px" width="12" height="30" viewBox="0 0 12 30"><path d="M2.550 9.500L6 5.300 9.450 9.500 M2.550 20.400L6 24.700 9.450 20.400" fill="none" stroke="#444" stroke-width="1.100" stroke-linecap="round" stroke-linejoin="round"/></svg>
<span class="t" style="top:259.94px;font-size:14.6px;line-height:14.6px;color:#2b2b2b;font-weight:700;left:1538px;letter-spacing:0.018px;">Paragraph spacing</span>
<span class="t" style="top:282.44px;font-size:14.6px;line-height:14.6px;color:#444;left:1538px;letter-spacing:-0.067px;">Before</span>
<span class="t" style="top:282.44px;font-size:14.6px;line-height:14.6px;color:#444;left:1660.2px;letter-spacing:0.294px;">After</span>
<div class="inp" style="left:1538px;top:300px;width:106px;height:30px;"></div>
<span class="t" style="top:309.24px;font-size:14.6px;line-height:14.6px;color:#444;left:1542.6px;letter-spacing:0.014px;">0 "</span>
<svg style="left:1627.5px;top:300px" width="12" height="30" viewBox="0 0 12 30"><path d="M2.550 9.500L6 5.300 9.450 9.500 M2.550 20.400L6 24.700 9.450 20.400" fill="none" stroke="#444" stroke-width="1.100" stroke-linecap="round" stroke-linejoin="round"/></svg>
<div class="inp" style="left:1660px;top:300px;width:106px;height:30px;"></div>
<span class="t" style="top:309.24px;font-size:14.6px;line-height:14.6px;color:#444;left:1664.6px;letter-spacing:-0.157px;">0.14 "</span>
<svg style="left:1749.5px;top:300px" width="12" height="30" viewBox="0 0 12 30"><path d="M2.550 9.500L6 5.300 9.450 9.500 M2.550 20.400L6 24.700 9.450 20.400" fill="none" stroke="#444" stroke-width="1.100" stroke-linecap="round" stroke-linejoin="round"/></svg>
<div style="left:1538px;top:342px;width:17px;height:18px;box-sizing:border-box;border:1px solid #a9a9a9;border-radius:4px;background:#fff;"></div>
<span class="t" style="top:344.64px;font-size:14.6px;line-height:14.6px;color:#444;left:1565.5px;letter-spacing:0.248px;">Don't add interval between</span>
<span class="t" style="top:367.24px;font-size:14.6px;line-height:14.6px;color:#444;left:1565.5px;letter-spacing:0.061px;">paragraphs of the same style</span>
<div style="left:1538px;top:395px;width:245px;height:1px;background:#e2e2e2;"></div>
<span class="t" style="top:411.14px;font-size:14.6px;line-height:14.6px;color:#2b2b2b;font-weight:700;left:1538px;letter-spacing:0.201px;">Indents</span>
<span class="t" style="top:433.24px;font-size:14.6px;line-height:14.6px;color:#444;left:1538px;letter-spacing:-0.111px;">Left</span>
<span class="t" style="top:433.24px;font-size:14.6px;line-height:14.6px;color:#444;left:1660.2px;letter-spacing:0.084px;">Right</span>
<div class="inp" style="left:1538px;top:451px;width:106px;height:30px;"></div>
<span class="t" style="top:460.24px;font-size:14.6px;line-height:14.6px;color:#444;left:1542.6px;letter-spacing:0.014px;">0 "</span>
<svg style="left:1627.5px;top:451px" width="12" height="30" viewBox="0 0 12 30"><path d="M2.550 9.500L6 5.300 9.450 9.500 M2.550 20.400L6 24.700 9.450 20.400" fill="none" stroke="#444" stroke-width="1.100" stroke-linecap="round" stroke-linejoin="round"/></svg>
<div class="inp" style="left:1660px;top:451px;width:106px;height:30px;"></div>
<span class="t" style="top:460.24px;font-size:14.6px;line-height:14.6px;color:#444;left:1664.6px;letter-spacing:0.014px;">0 "</span>
<svg style="left:1749.5px;top:451px" width="12" height="30" viewBox="0 0 12 30"><path d="M2.550 9.500L6 5.300 9.450 9.500 M2.550 20.400L6 24.700 9.450 20.400" fill="none" stroke="#444" stroke-width="1.100" stroke-linecap="round" stroke-linejoin="round"/></svg>
<span class="t" style="top:496.24px;font-size:14.6px;line-height:14.6px;color:#444;left:1538px;letter-spacing:-0.282px;">Special</span>
<div class="inp" style="left:1538px;top:513px;width:106px;height:30px;"></div>
<span class="t" style="top:522.24px;font-size:14.6px;line-height:14.6px;color:#444;left:1542.6px;letter-spacing:0.019px;">(none)</span>
<svg style="left:1626.5px;top:524.1px" width="12" height="12" viewBox="-6 -6 12 12"><path d="M-3.5 -2.10L0 2.10L3.5 -2.10" fill="none" stroke="#444" stroke-width="1.1" stroke-linecap="round" stroke-linejoin="round"/></svg>
<div class="inp" style="left:1660px;top:513px;width:106px;height:30px;"></div>
<span class="t" style="top:522.24px;font-size:14.6px;line-height:14.6px;color:#444;left:1664.6px;letter-spacing:0.014px;">0 "</span>
<svg style="left:1749.5px;top:513px" width="12" height="30" viewBox="0 0 12 30"><path d="M2.550 9.500L6 5.300 9.450 9.500 M2.550 20.400L6 24.700 9.450 20.400" fill="none" stroke="#444" stroke-width="1.100" stroke-linecap="round" stroke-linejoin="round"/></svg>
<div style="left:1538px;top:553px;width:245px;height:1px;background:#e2e2e2;"></div>
<div class="inp" style="left:1538px;top:564px;width:61px;height:30px;"></div>
<div style="left:1540px;top:566.5px;width:38px;height:25px;box-sizing:border-box;border:1px solid #d5d5d5;border-radius:4px;background:#fff;"></div>
<svg style="left:1538px;top:564px;" width="61" height="30" viewBox="0 0 61 30"><path d="M2.300 23.400L40.600 3" stroke="#ff1a1a" stroke-width="1.400"/></svg>
<svg style="left:1582.5px;top:574.4px" width="12" height="12" viewBox="-6 -6 12 12"><path d="M-3.5 -2.10L0 2.10L3.5 -2.10" fill="none" stroke="#444" stroke-width="1.1" stroke-linecap="round" stroke-linejoin="round"/></svg>
<span class="t" style="top:572.54px;font-size:14.6px;line-height:14.6px;color:#444;left:1605.8px;letter-spacing:0.164px;">Background color</span>
<div style="left:1538px;top:604px;width:245px;height:1px;background:#e2e2e2;"></div>
<span class="t" style="top:620.44px;font-size:14.6px;line-height:14.6px;color:#444;left:1580.5px;letter-spacing:0.032px;">Show advanced settings</span>
<div style="left:1580.5px;top:638px;width:159px;height:1px;border-top:1px dotted #444;height:0;"></div>
<div style="left:1810px;top:205px;width:35px;height:30px;background:#e0e0e0;border-radius:5px;"></div>
<svg style="left:1816px;top:208px;" width="24" height="24" viewBox="0 0 24 24"><path class="s" d="M12.200 15.400H9a4 4 0 0 1 0-8H19.700 M12.200 7.400V20.400 M17 7.400V20.400" style="stroke-width:1.200"/></svg>
<svg style="left:1816px;top:251px;" width="24" height="24" viewBox="0 0 24 24"><g fill="none" stroke="#a9a9a9" stroke-width="1.100"><rect x="2.800" y="3.800" width="17.400" height="16.400" rx="1"/><path d="M2.800 9.600H20.200 M2.800 15H20.200 M8.600 5V20.200 M14.400 5V20.200"/><path d="M2.800 4.600H20.200" stroke-width="2"/></g></svg>
<svg style="left:1816px;top:294px;" width="24" height="24" viewBox="0 0 24 24"><g fill="none" stroke="#a9a9a9" stroke-width="1.100" stroke-linejoin="round"><rect x="4.900" y="4.800" width="15.200" height="15.200" rx="1"/><path d="M4.900 19.300L11.800 12.400 20.100 19.300"/><circle cx="15.800" cy="9.400" r="1.200"/></g></svg>
<svg style="left:1816px;top:336px;" width="24" height="24" viewBox="0 0 24 24"><g fill="none" stroke="#a9a9a9" stroke-width="1.100"><rect x="4.600" y="2.600" width="14.600" height="18.800" rx="1.200"/><rect x="6.900" y="4.900" width="10.200" height="2.600" rx=".8"/><rect x="6.900" y="16.400" width="10.200" height="2.600" rx=".8"/></g></svg>
<svg style="left:1816px;top:379px;" width="24" height="24" viewBox="0 0 24 24"><g fill="none" stroke="#a9a9a9" stroke-width="1.100"><path d="M9.500 15.800A6.600 6.600 0 1 1 15.600 9.400"/><rect x="9.500" y="9.400" width="12" height="12" rx=".6"/></g></svg>
<svg style="left:1816px;top:422px;" width="24" height="24" viewBox="0 0 24 24"><g fill="none" stroke="#a9a9a9" stroke-width="1.100"><rect x="4.900" y="15.800" width="3.300" height="3.600" rx=".5"/><rect x="10.700" y="10" width="3.600" height="9.400" rx=".5"/><rect x="17" y="4.300" width="3.400" height="15.100" rx=".5"/></g></svg>
<svg style="left:1816px;top:464px;" width="24" height="24" viewBox="0 0 24 24"><g fill="none" stroke="#a9a9a9" stroke-width="1.100" stroke-linecap="round" stroke-linejoin="round"><path d="M7 15.500L12.400 3.800 17.900 15.500 M8.900 11.500H16"/><path d="M5.600 20.700Q12.400 14 19.300 20.700"/></g></svg>
<svg style="left:1816px;top:506px;" width="24" height="24" viewBox="0 0 24 24"><g fill="none" stroke="#a9a9a9" stroke-width="1.100" stroke-linejoin="round"><path d="M4.400 10.400V19.300a1 1 0 0 0 1 1H19.400a1 1 0 0 0 1-1V10.400L12.400 15.300z"/><path d="M6.800 11.800V5.300a1 1 0 0 1 1-1H17a1 1 0 0 1 1 1V11.800"/><path d="M9.300 7.400H15.500 M9.300 10H13.500"/></g></svg>
</div>
<div id="status" style="left:0;top:0;width:0;height:0">
<div style="left:0px;top:831px;width:1853px;height:39px;background:#fff;border-top:1px solid #cdcdcd;box-sizing:border-box;"></div>
<div style="left:94px;top:832px;width:1px;height:38px;background:#e3e3e3;"></div>
<div style="left:1263px;top:832px;width:1px;height:38px;background:#e3e3e3;"></div>
<div style="left:1526px;top:832px;width:1px;height:38px;background:#e3e3e3;"></div>
<div style="left:1592px;top:832px;width:1px;height:38px;background:#e3e3e3;"></div>
<span class="t" style="top:844.64px;font-size:14.6px;line-height:14.6px;color:#444;left:12.8px;letter-spacing:-0.151px;">Page 1 of 1</span>
<svg style="left:108px;top:838px;" width="22" height="24" viewBox="0 0 22 24"><path d="M2.400 4.600H17.800 M2.400 9.800H17.800 M13.600 17.400H17.800" stroke="#444" stroke-width="1.100" fill="none"/><text x="2" y="20.800" font-size="7.600" fill="#3d6fd6" font-weight="700">12</text></svg>
<span class="t" style="top:844.64px;font-size:14.6px;line-height:14.6px;color:#444;left:138.2px;letter-spacing:0.344px;">Word count</span>
<span class="t" style="top:844.64px;font-size:14.6px;line-height:14.6px;color:#444;left:680.2px;letter-spacing:-0.085px;">All changes saved</span>
<span class="t" style="top:844.14px;font-size:14.6px;line-height:14.6px;color:#444;left:1278.2px;letter-spacing:-0.083px;">English – United States</span>
<svg style="left:1437px;top:846.3px" width="12" height="12" viewBox="-6 -6 12 12"><path d="M-3.1 -1.86L0 1.86L3.1 -1.86" fill="none" stroke="#444" stroke-width="1.2" stroke-linecap="round" stroke-linejoin="round"/></svg>
<svg style="left:1458px;top:839px;" width="24" height="24" viewBox="0 0 24 24"><g class="s" style="stroke-width:1.100"><circle cx="11.500" cy="12.500" r="9"/><ellipse cx="11.500" cy="12.500" rx="4.200" ry="9"/><path d="M2.500 12.500H20.500 M3.900 7.500H19.100 M3.900 17.500H19.100"/></g></svg>
<div style="left:1489px;top:836px;width:30px;height:30px;background:#e0e0e0;border-radius:4.500px;"></div>
<svg style="left:1489px;top:836px;" width="30" height="30" viewBox="0 0 30 30"><path class="s" style="stroke-width:1.200" d="M12.700 23.600H8.800a1.500 1.500 0 0 1-1.500-1.500V8.800a1.500 1.500 0 0 1 1.500-1.500H22.300a1.500 1.500 0 0 1 1.500 1.500V17.700 M12.200 19.600L15.400 11.200 18.700 19.600 M13.300 17.200H17.600"/><path d="M17.200 22.600L20.600 25.800 25.800 19.300" fill="none" stroke="#3f6fd8" stroke-width="1.300"/></svg>
<svg style="left:1535px;top:836px;" width="30" height="30" viewBox="0 0 30 30"><path d="M6.100 10.500H11.800 M6.100 14.200H13.900" stroke="#3f6fd8" stroke-width="1.300" fill="none"/><path class="s" style="stroke-width:1.200" d="M9.400 18.400Q8.300 19 8.300 19.800V23.600H12.600L23.900 12.100 19.900 8.300 16.400 11.500 M17 11L21.100 14.900"/></svg>
<svg style="left:1568.5px;top:846.3px" width="12" height="12" viewBox="-6 -6 12 12"><path d="M-3.4 -2.04L0 2.04L3.4 -2.04" fill="none" stroke="#444" stroke-width="1.2" stroke-linecap="round" stroke-linejoin="round"/></svg>
<svg style="left:1604px;top:840px;" width="24" height="24" viewBox="0 0 24 24"><rect class="s" style="stroke-width:1.100" x="4.900" y="2.700" width="15" height="17.600" rx="1.800"/><path d="M7.400 8V5.400H10 M14.800 5.400H17.400V8 M17.400 15V17.600H14.800 M10 17.600H7.400V15" fill="none" stroke="#3d6fd6" stroke-width="1"/></svg>
<svg style="left:1644px;top:840px;" width="24" height="24" viewBox="0 0 24 24"><path class="s" style="stroke-width:1.100" d="M4.900 13.200V4.400a1.700 1.700 0 0 1 1.700-1.700H18.300A1.700 1.700 0 0 1 20 4.400V13.200"/><path d="M5 17.400H10.400 M7.300 15.200L5 17.400 7.300 19.600 M14.600 17.400H20 M17.700 15.200L20 17.400 17.700 19.600" fill="none" stroke="#3d6fd6" stroke-width="1"/></svg>
<svg style="left:1684px;top:840px;" width="24" height="24" viewBox="0 0 24 24"><path class="s" style="stroke-width:1.100" d="M4.900 11.700H20.200"/></svg>
<span class="t" style="top:844.14px;font-size:14.6px;line-height:14.6px;color:#444;left:1720.8px;letter-spacing:0.079px;">Zoom 100%</span>
<svg style="left:1814px;top:840px;" width="24" height="24" viewBox="0 0 24 24"><path class="s" style="stroke-width:1.100" d="M5 11.700H19.800 M12.400 4.300V19.100"/></svg>
</div>
</body></html>
